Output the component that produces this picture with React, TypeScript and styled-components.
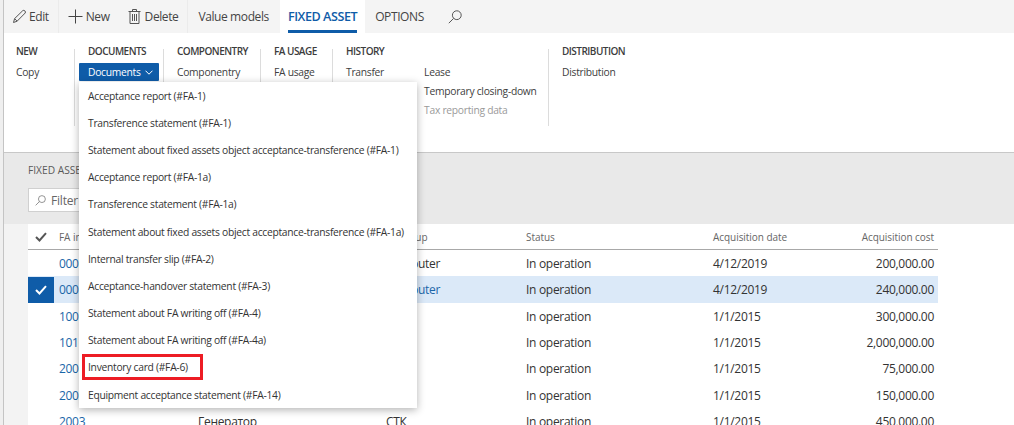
import styled, { createGlobalStyle } from "styled-components";

const Global = createGlobalStyle`
  html, body {
    margin: 0;
    padding: 0;
    height: 425px;
    overflow: hidden;
    background: #fff;
  }
  body {
    font-family: "Open Sans", "Noto Sans", sans-serif;
    color: #333;
  }
  * { box-sizing: border-box; }
`;

const Page = styled.div`
  display: flex;
  height: 425px;
  overflow: hidden;
`;
const Rail = styled.div`
  width: 4px;
  flex: none;
  background: #efefef;
  border-right: 1px solid #c4c4c4;
`;
const Main = styled.div`
  flex: 1;
  display: flex;
  flex-direction: column;
  min-width: 0;
`;

const TopBar = styled.div`
  height: 33px;
  flex: none;
  display: flex;
  align-items: stretch;
  background: #f4f4f4;
  font-size: 12px;
  letter-spacing: -0.4px;
`;
const ActionGroup = styled.div`
  display: flex;
  align-items: center;
  padding-right: 9px;
  border-right: 1px solid #ebebeb;
`;
const Action = styled.div`
  display: flex;
  align-items: center;
  gap: ${(p) => p.$gap ?? 3}px;
  margin-left: ${(p) => p.$left ?? 0}px;
  color: #444;
  white-space: nowrap;
  svg { flex: none; }
`;
const Tab = styled.div`
  display: flex;
  align-items: center;
  margin-left: ${(p) => p.$left ?? 0}px;
  padding: 0 8px;
  position: relative;
  white-space: nowrap;
  background: ${(p) => (p.$active ? "#fff" : "transparent")};
  color: ${(p) => (p.$active ? "#0f5ca8" : "#444")};
  font-size: ${(p) => (p.$active ? 12.6 : 12)}px;
  font-weight: ${(p) => (p.$active ? 600 : 400)};
  letter-spacing: ${(p) => (p.$active ? "-0.45px" : "-0.4px")};
  &::after {
    content: "";
    display: ${(p) => (p.$active ? "block" : "none")};
    position: absolute;
    left: 8px;
    right: 8px;
    bottom: 0;
    height: 3px;
    background: #0f5ca8;
  }
`;
const SearchButton = styled.div`
  display: flex;
  align-items: center;
  margin-left: 16px;
`;

const Ribbon = styled.div`
  height: 120px;
  flex: none;
  display: flex;
  align-items: flex-start;
  padding-top: 11px;
  background: #fff;
  border-bottom: 1px solid #c8c8c8;
`;
const Group = styled.div`
  position: relative;
  height: 82px;
  width: ${(p) => p.$width}px;
  flex: none;
  padding-left: ${(p) => (p.$first ? 12 : 14)}px;
  &::before {
    content: "";
    display: ${(p) => (p.$first ? "none" : "block")};
    position: absolute;
    left: 0;
    top: 5px;
    bottom: 0;
    width: 1px;
    background: #dcdcdc;
  }
`;
const GroupTitle = styled.div`
  font-size: 10px;
  line-height: 14px;
  font-weight: 600;
  letter-spacing: -0.52px;
  color: #3c3c3c;
  white-space: nowrap;
`;
const GroupColumns = styled.div`
  display: flex;
  gap: ${(p) => p.$gap ?? 0}px;
`;
const RibbonList = styled.div`
  display: flex;
  flex-direction: column;
  margin-top: 5px;
`;
const RibbonItem = styled.div`
  font-size: 10.3px;
  line-height: 19px;
  height: 19px;
  letter-spacing: -0.28px;
  white-space: nowrap;
  color: ${(p) => (p.$disabled ? "#9a9a9a" : "#404040")};
`;
const MenuAnchor = styled.div`
  position: relative;
  margin: 5px 0 0 -9px;
  width: 80px;
`;
const MenuButton = styled.div`
  height: 18px;
  display: flex;
  align-items: center;
  gap: 4px;
  padding-left: 9px;
  background: #0f5ca8;
  color: #fff;
  font-size: 10.3px;
  letter-spacing: -0.28px;
  border-radius: 1px;
`;
const Menu = styled.div`
  position: absolute;
  left: 0;
  top: 19px;
  width: 338px;
  background: #fff;
  box-shadow: 0 2px 8px rgba(0, 0, 0, 0.3);
  z-index: 5;
`;
const MenuItem = styled.div`
  position: relative;
  height: 27.2px;
  display: flex;
  align-items: center;
  padding-left: 9px;
  font-size: 10.3px;
  letter-spacing: -0.28px;
  color: #333;
  white-space: nowrap;
`;
const Highlight = styled.div`
  position: absolute;
  left: 3px;
  top: 0;
  width: 121px;
  height: 26px;
  border: 3px solid #ed1c24;
`;

const Body = styled.div`
  flex: 1;
  min-height: 0;
  display: flex;
  flex-direction: column;
  background: #f3f3f3;
  padding-left: 24px;
`;
const BodyHead = styled.div`
  height: 71px;
  flex: none;
  margin-left: -24px;
  padding-left: 24px;
  background: #e9e9e9;
`;
const Caption = styled.div`
  font-size: 10.2px;
  line-height: 14px;
  padding-top: 10px;
  color: #5a5a5a;
  white-space: nowrap;
`;
const FilterBox = styled.div`
  width: 200px;
  height: 24px;
  margin-top: 11px;
  display: flex;
  align-items: center;
  gap: 5px;
  padding-left: 6px;
  background: #fff;
  border: 1px solid #d0d0d0;
  font-size: 12px;
  letter-spacing: -0.2px;
  color: #666;
`;
const Panel = styled.div`
  flex: 1;
  background: #fff;
`;
const Row = styled.div`
  display: grid;
  width: 910px;
  grid-template-columns: 26px 144px 188px 140px 187px 110px 1fr;
  align-items: center;
  height: ${(p) => (p.$head ? 26 : 26.3)}px;
  padding-top: ${(p) => (p.$head ? 0 : 1)}px;
  font-size: ${(p) => (p.$head ? 10 : 12)}px;
  letter-spacing: ${(p) => (p.$head ? "-0.05px" : "-0.3px")};
  color: ${(p) => (p.$head ? "#666" : "#333")};
  background: ${(p) => (p.$selected ? "#dbe9f8" : "transparent")};
  border-bottom: ${(p) => (p.$head ? "1px solid #a8a8a8" : "none")};
  white-space: nowrap;
`;
const CheckCell = styled.div`
  height: 100%;
  display: flex;
  align-items: center;
  justify-content: center;
  background: ${(p) => (p.$selected ? "#0f5ca8" : "transparent")};
`;
const Cell = styled.div`
  padding-left: ${(p) => p.$pad ?? 0}px;
  color: ${(p) => (p.$link ? "#1a66a8" : "inherit")};
`;
const CostCell = styled.div`
  text-align: right;
  padding-right: 4px;
`;

const documents = [
  "Acceptance report (#FA-1)",
  "Transference statement (#FA-1)",
  "Statement about fixed assets object acceptance-transference (#FA-1)",
  "Acceptance report (#FA-1a)",
  "Transference statement (#FA-1a)",
  "Statement about fixed assets object acceptance-transference (#FA-1a)",
  "Internal transfer slip (#FA-2)",
  "Acceptance-handover statement (#FA-3)",
  "Statement about FA writing off (#FA-4)",
  "Statement about FA writing off (#FA-4a)",
  "Inventory card (#FA-6)",
  "Equipment acceptance statement (#FA-14)",
];

const assets = [
  { id: "0001", name: "", group: "Computer", date: "4/12/2019", cost: "200,000.00" },
  { id: "0002", name: "", group: "Computer", date: "4/12/2019", cost: "240,000.00", selected: true },
  { id: "1001", name: "", group: "", date: "1/1/2015", cost: "300,000.00" },
  { id: "1010", name: "", group: "", date: "1/1/2015", cost: "2,000,000.00" },
  { id: "2001", name: "", group: "", date: "1/1/2015", cost: "75,000.00" },
  { id: "2002", name: "", group: "", date: "1/1/2015", cost: "150,000.00" },
  { id: "2003", name: "Генератор", group: "СТК", date: "1/1/2015", cost: "450,000.00" },
];

const PencilIcon = () => (
  <svg width="15" height="15" viewBox="0 0 15 15" fill="none" stroke="#555" strokeWidth="1">
    <path d="M1.5 13.5 L2.6 9.6 L10.8 1.6 Q11.8 0.9 12.9 1.9 Q13.9 3 13.2 4 L5.1 12.2 Z" />
    <path d="M2.6 9.6 L5.1 12.2" />
  </svg>
);
const PlusIcon = () => (
  <svg width="15" height="15" viewBox="0 0 15 15" stroke="#444" strokeWidth="1">
    <path d="M7.5 0.5 V14.5 M0.5 7.5 H14.5" />
  </svg>
);
const TrashIcon = () => (
  <svg width="13" height="15" viewBox="0 0 13 15" fill="none" stroke="#555" strokeWidth="1">
    <path d="M0.5 2.5 H12.5 M4.5 2.5 V0.5 H8.5 V2.5 M2 2.5 V14.5 H11 V2.5" />
    <path d="M4.5 5 V12 M6.5 5 V12 M8.5 5 V12" />
  </svg>
);
const SearchIcon = ({ size = 14, color = "#555" }: { size?: number; color?: string }) => (
  <svg width={size} height={size} viewBox="0 0 14 14" fill="none" stroke={color} strokeWidth="1">
    <circle cx="8.8" cy="5.2" r="4.4" />
    <path d="M5.6 8.4 L0.8 13.2" />
  </svg>
);
const CheckIcon = ({ color }: { color: string }) => (
  <svg width="12" height="10" viewBox="0 0 12 10" fill="none" stroke={color} strokeWidth="2">
    <path d="M1 5 L4.5 8.5 L11 1.2" />
  </svg>
);
const Chevron = () => (
  <svg width="8" height="5" viewBox="0 0 8 5" fill="none" stroke="#fff" strokeWidth="1">
    <path d="M0.5 0.7 L4 4.2 L7.5 0.7" />
  </svg>
);

const App = () => {
  return (
    <Page>
      <Global />
      <Rail />
      <Main>
        <TopBar>
          <ActionGroup>
            <Action $left={8} $gap={2}>
              <PencilIcon />
              Edit
            </Action>
          </ActionGroup>
          <ActionGroup>
            <Action $left={9}>
              <PlusIcon />
              New
            </Action>
            <Action $left={18} $gap={4}>
              <TrashIcon />
              Delete
            </Action>
          </ActionGroup>
          <Tab $left={2}>Value models</Tab>
          <Tab $left={3} $active>
            FIXED ASSET
          </Tab>
          <Tab $left={2}>OPTIONS</Tab>
          <SearchButton>
            <SearchIcon />
          </SearchButton>
        </TopBar>

        <Ribbon>
          <Group $first $width={70}>
            <GroupTitle>NEW</GroupTitle>
            <RibbonList>
              <RibbonItem>Copy</RibbonItem>
            </RibbonList>
          </Group>
          <Group $width={89}>
            <GroupTitle>DOCUMENTS</GroupTitle>
            <MenuAnchor>
              <MenuButton>
                Documents
                <Chevron />
              </MenuButton>
              <Menu>
                {documents.map((label) => (
                  <MenuItem key={label}>
                    {label}
                    {label === "Inventory card (#FA-6)" && <Highlight />}
                  </MenuItem>
                ))}
              </Menu>
            </MenuAnchor>
          </Group>
          <Group $width={97}>
            <GroupTitle>COMPONENTRY</GroupTitle>
            <RibbonList>
              <RibbonItem>Componentry</RibbonItem>
            </RibbonList>
          </Group>
          <Group $width={72}>
            <GroupTitle>FA USAGE</GroupTitle>
            <RibbonList>
              <RibbonItem>FA usage</RibbonItem>
            </RibbonList>
          </Group>
          <Group $width={216}>
            <GroupTitle>HISTORY</GroupTitle>
            <GroupColumns $gap={40}>
              <RibbonList>
                <RibbonItem>Transfer</RibbonItem>
              </RibbonList>
              <RibbonList>
                <RibbonItem>Lease</RibbonItem>
                <RibbonItem>Temporary closing-down</RibbonItem>
                <RibbonItem $disabled>Tax reporting data</RibbonItem>
              </RibbonList>
            </GroupColumns>
          </Group>
          <Group $width={150}>
            <GroupTitle>DISTRIBUTION</GroupTitle>
            <RibbonList>
              <RibbonItem>Distribution</RibbonItem>
            </RibbonList>
          </Group>
        </Ribbon>

        <Body>
          <BodyHead>
            <Caption>FIXED ASSETS</Caption>
            <FilterBox>
              <SearchIcon size={11} color="#777" />
              Filter
            </FilterBox>
          </BodyHead>
          <Panel>
            <Row $head>
              <CheckCell>
                <CheckIcon color="#555" />
              </CheckCell>
              <Cell $pad={5}>FA inventory</Cell>
              <Cell>Name</Cell>
              <Cell>FA group</Cell>
              <Cell>Status</Cell>
              <Cell>Acquisition date</Cell>
              <CostCell>Acquisition cost</CostCell>
            </Row>
            {assets.map((asset) => (
              <Row key={asset.id} $selected={asset.selected}>
                <CheckCell $selected={asset.selected}>
                  {asset.selected && <CheckIcon color="#fff" />}
                </CheckCell>
                <Cell $pad={5} $link>
                  {asset.id}
                </Cell>
                <Cell>{asset.name}</Cell>
                <Cell $link={asset.selected}>{asset.group}</Cell>
                <Cell>In operation</Cell>
                <Cell>{asset.date}</Cell>
                <CostCell>{asset.cost}</CostCell>
              </Row>
            ))}
          </Panel>
        </Body>
      </Main>
    </Page>
  );
};

export default App;
